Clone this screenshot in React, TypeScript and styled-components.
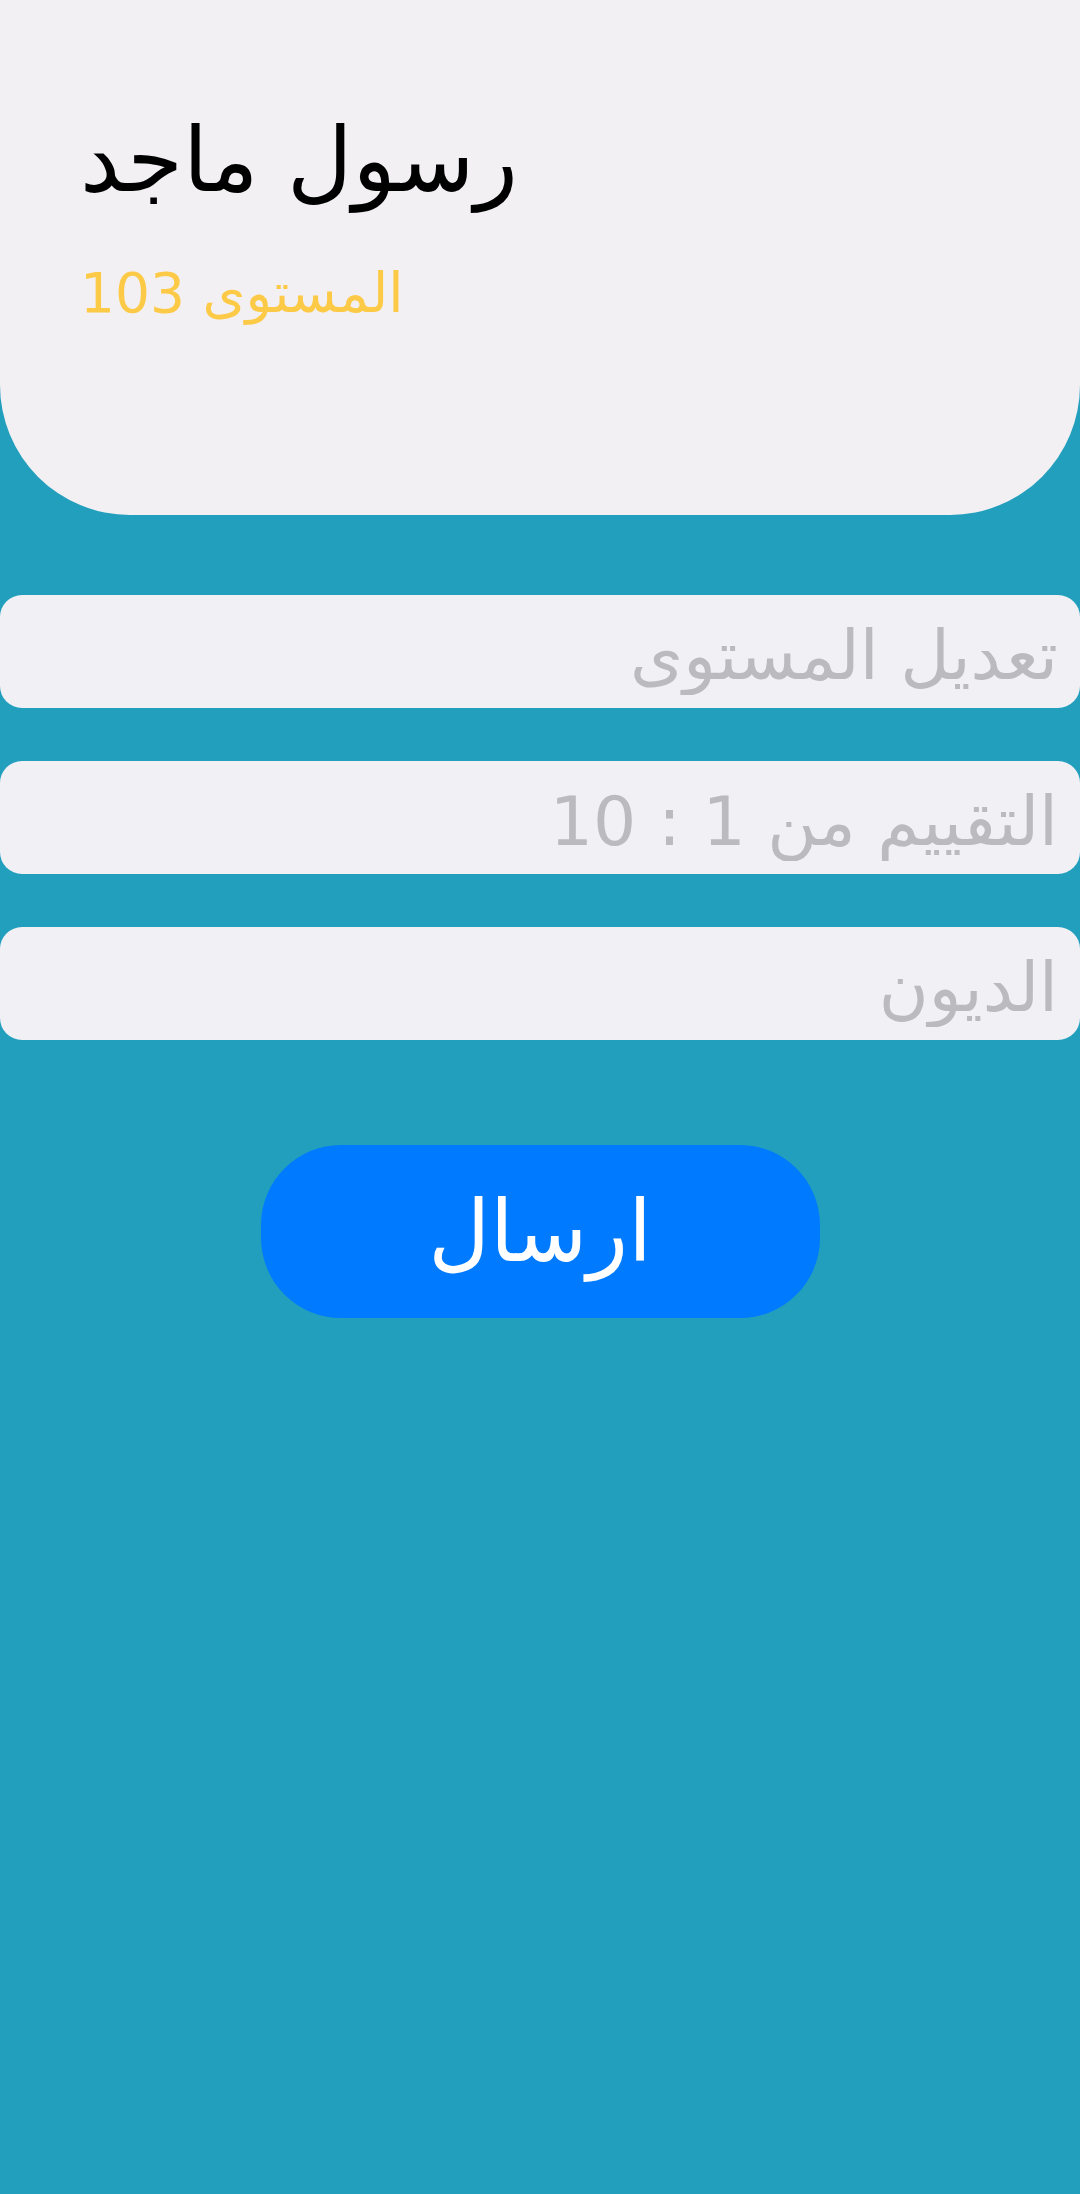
import styled, { createGlobalStyle } from "styled-components";

const GlobalStyle = createGlobalStyle`
  html, body {
    margin: 0;
    padding: 0;
    background: #229fbd;
  }

  body {
    font-family: "DejaVu Sans", "Noto Sans", sans-serif;
  }

  input::placeholder {
    color: #bbbabf;
  }
`;

const fields = ["تعديل المستوى", "التقييم من 1 : 10", "الديون"];

export default function App() {
  return (
    <Page>
      <GlobalStyle />
      <Header>
        <Name>رسول ماجد</Name>
        <Level>المستوى 103</Level>
      </Header>

      <Form onSubmit={(e) => e.preventDefault()}>
        {fields.map((label) => (
          <Field key={label} placeholder={label} dir="rtl" />
        ))}
        <Submit type="submit">ارسال</Submit>
      </Form>
    </Page>
  );
}

const Page = styled.div`
  min-height: 2194px;
  background: #229fbd;
  display: flex;
  flex-direction: column;
`;

const Header = styled.header`
  box-sizing: border-box;
  height: 515px;
  padding: 106px 80px 0;
  background: #f2f0f3;
  border-radius: 0 0 130px 130px;
  display: flex;
  flex-direction: column;
  align-items: flex-start;
`;

const Name = styled.h1`
  margin: 0;
  font-size: 90px;
  font-weight: 400;
  line-height: 1.2;
  color: #000;
`;

const Level = styled.div`
  margin-top: 46px;
  font-size: 55px;
  line-height: 1.2;
  color: #fdca48;
`;

const Form = styled.form`
  display: flex;
  flex-direction: column;
  gap: 53px;
  margin-top: 80px;
`;

const Field = styled.input`
  box-sizing: border-box;
  width: 100%;
  height: 113px;
  margin: 0;
  padding: 8px 22px 0;
  border: 0;
  border-radius: 22px;
  background: #f0f0f5;
  font-family: inherit;
  font-size: 68px;
  color: #222;
  outline: none;
`;

const Submit = styled.button`
  align-self: center;
  width: 559px;
  height: 173px;
  margin-top: 52px;
  border: 0;
  border-radius: 80px;
  background: #007aff;
  color: #fff;
  font-family: inherit;
  font-size: 85px;
  cursor: pointer;
`;
